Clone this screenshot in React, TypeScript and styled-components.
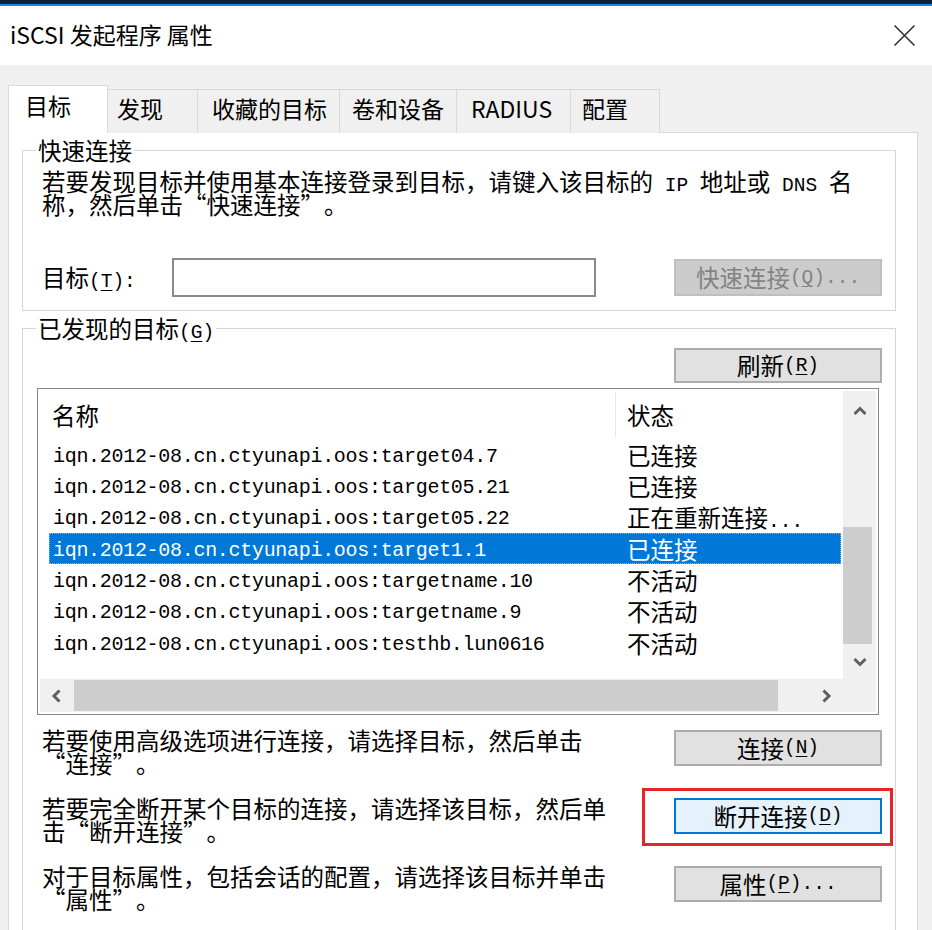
import React from 'react'
import styled, { createGlobalStyle, css } from 'styled-components'

interface Target {
    name: string;
    status: string;
}

const targets: Target[] = [
    { name: 'iqn.2012-08.cn.ctyunapi.oos:target04.7', status: '已连接' },
    { name: 'iqn.2012-08.cn.ctyunapi.oos:target05.21', status: '已连接' },
    { name: 'iqn.2012-08.cn.ctyunapi.oos:target05.22', status: '正在重新连接...' },
    { name: 'iqn.2012-08.cn.ctyunapi.oos:target1.1', status: '已连接' },
    { name: 'iqn.2012-08.cn.ctyunapi.oos:targetname.10', status: '不活动' },
    { name: 'iqn.2012-08.cn.ctyunapi.oos:targetname.9', status: '不活动' },
    { name: 'iqn.2012-08.cn.ctyunapi.oos:testhb.lun0616', status: '不活动' },
];

const tabs = [
    { label: '目标', w: 100, pl: 16 },
    { label: '发现', w: 91, pl: 9 },
    { label: '收藏的目标', w: 143, pl: 14 },
    { label: '卷和设备', w: 118, pl: 12 },
    { label: 'RADIUS', w: 115, pl: 14 },
    { label: '配置', w: 90, pl: 11 },
];

const actions = [
    { lines: ['若要使用高级选项进行连接，请选择目标，然后单击', '“连接”。'], button: '连接(&N)', focused: false },
    { lines: ['若要完全断开某个目标的连接，请选择该目标，然后单', '击“断开连接”。'], button: '断开连接(&D)', focused: true },
    { lines: ['对于目标属性，包括会话的配置，请选择该目标并单击', '“属性”。'], button: '属性(&P)...', focused: false },
];

const GlobalStyle = createGlobalStyle`
    html, body {
        margin: 0;
        padding: 0;
    }
    body {
        background: #f0f0f0;
        color: #000;
        font-family: "Noto Sans CJK SC", "Noto Sans", sans-serif;
        text-spacing-trim: space-all;
    }
`;

const Window = styled.div`
    width: 932px;
    height: 930px;
    display: flex;
    flex-direction: column;
    overflow: hidden;
    background: #f0f0f0;
`;

const TopEdge = styled.div`
    height: 4px;
    background: #0d2142;
    border-bottom: 2px solid #2d83d6;
`;

const TitleBar = styled.div`
    height: 59px;
    background: #fff;
    display: flex;
    align-items: center;
    justify-content: space-between;
    padding: 0 17px 0 10px;
`;

const Title = styled.div`
    font-size: 23px;
    line-height: 30px;
    margin-top: -3px;
`;

const Body = styled.div`
    flex: 1;
    min-height: 0;
    overflow: hidden;
    padding: 20px 14px 0 8px;
`;

const TabBar = styled.div`
    display: flex;
    align-items: flex-end;
    height: 48px;
    margin-bottom: -1px;
`;

const Tab = styled.div<{ $active?: boolean; $w: number; $pl: number }>`
    box-sizing: border-box;
    width: ${p => p.$w}px;
    height: ${p => (p.$active ? 48 : 44)}px;
    padding: ${p => (p.$active ? 4 : 3)}px 0 0 ${p => p.$pl}px;
    border: 1px solid #d9d9d9;
    border-bottom: none;
    background: ${p => (p.$active ? '#fff' : '#f0f0f0')};
    font-size: 23px;
    line-height: 30px;
    white-space: nowrap;
    & + & {
        margin-left: -1px;
    }
    ${p => p.$active && css`
        position: relative;
        z-index: 1;
    `}
`;

const Panel = styled.div`
    background: #fff;
    border: 1px solid #d9d9d9;
    padding: 5px 21px 0 13px;
    display: flex;
    flex-direction: column;
`;

const Group = styled.fieldset<{ $mt?: number; $pb?: number }>`
    margin: ${p => p.$mt ?? 0}px 0 0;
    padding: 0 13px ${p => p.$pb ?? 13}px 14px;
    border: 1px solid #d5d5d5;
    min-inline-size: 0;
    display: flex;
    flex-direction: column;
`;

const Legend = styled.legend`
    padding: 0 2px;
    margin-left: -1px;
    font-size: 23.5px;
    line-height: 24px;
    white-space: nowrap;
`;

const Desc = styled.div<{ $mt?: number }>`
    margin-top: ${p => p.$mt ?? 0}px;
    padding-left: 5px;
    font-size: 23.5px;
    line-height: 23px;
    white-space: nowrap;
`;

const Wide = styled.span`
    font-size: 23.5px;
    font-variant-east-asian: full-width;
`;

const Half = styled.span`
    font-family: "Liberation Mono", monospace;
    font-size: 19.5px;
    line-height: 0;
`;

const Key = styled.span`
    text-decoration: underline;
    text-underline-offset: 3px;
    text-decoration-thickness: 1px;
`;

const TargetRow = styled.div`
    display: flex;
    align-items: center;
    height: 39px;
    margin-top: 42px;
`;

const FieldLabel = styled.div`
    box-sizing: border-box;
    width: 135px;
    padding-left: 5px;
    font-size: 23.5px;
    line-height: 23px;
    white-space: nowrap;
`;

const TextInput = styled.div`
    box-sizing: border-box;
    width: 424px;
    height: 39px;
    border: 2px solid #8a8a8a;
    background: #fff;
`;

const ButtonSlot = styled.div<{ $marked?: boolean; $mt?: number }>`
    position: relative;
    margin-left: auto;
    margin-top: ${p => p.$mt ?? 0}px;
    ${p => p.$marked && css`
        &::after {
            content: '';
            position: absolute;
            left: -32px;
            right: -11px;
            top: -10px;
            bottom: -12px;
            border: 3px solid #e8242b;
        }
    `}
`;

const Button = styled.button<{ $focused?: boolean; $h?: number }>`
    box-sizing: border-box;
    width: 208px;
    height: ${p => p.$h ?? 36}px;
    margin: 0;
    padding: 0;
    border: 2px solid ${p => (p.$focused ? '#0078d7' : '#adadad')};
    background: ${p => (p.$focused ? '#e5f1fb' : '#e1e1e1')};
    color: #000;
    font-family: inherit;
    font-size: 23.5px;
    line-height: 23px;
    display: flex;
    align-items: center;
    justify-content: center;
    white-space: nowrap;
    &:disabled {
        background: #cccccc;
        border-color: #bfbfbf;
        color: #838383;
    }
`;

const ListBox = styled.div`
    box-sizing: border-box;
    height: 327px;
    margin: 5px 3px 0 0;
    border: 1px solid #828790;
    padding: 2px;
    background: #fff;
    display: grid;
    grid-template-columns: 1fr 33px;
    grid-template-rows: 1fr 33px;
`;

const ListContent = styled.div`
    overflow: hidden;
    min-width: 0;
`;

const HeaderRow = styled.div`
    display: flex;
    height: 48px;
    font-size: 23.5px;
    line-height: 48px;
`;

const HeadCell = styled.div<{ $w?: number; $pl: number }>`
    box-sizing: border-box;
    ${p => p.$w && `width: ${p.$w}px;`}
    padding-left: ${p => p.$pl}px;
    white-space: nowrap;
`;

const HeadDivider = styled.div`
    width: 1px;
    margin: 1px 0 2px;
    background: #e5e5e5;
`;

const Row = styled.div<{ $selected?: boolean }>`
    display: flex;
    align-items: center;
    height: 31.33px;
    margin: 0 2px 0 9px;
    ${p => p.$selected && css`
        background: #0078d7;
        color: #fff;
        outline: 1px dotted #f0a040;
        outline-offset: -1px;
    `}
`;

const NameCell = styled.div`
    box-sizing: border-box;
    width: 578px;
    padding: 4px 0 0 4px;
    font-family: "Liberation Mono", monospace;
    font-size: 20px;
    letter-spacing: -0.3px;
    line-height: 24px;
    white-space: nowrap;
`;

const StatusCell = styled.div`
    font-size: 23.5px;
    line-height: 24px;
    white-space: nowrap;
`;

const VScroll = styled.div`
    background: #f0f0f0;
    display: flex;
    flex-direction: column;
`;

const HScroll = styled.div`
    background: #f0f0f0;
    display: flex;
`;

const Corner = styled.div`
    background: #f0f0f0;
`;

const ArrowBox = styled.div<{ $size: number }>`
    flex: 0 0 ${p => p.$size}px;
    display: flex;
    align-items: center;
    justify-content: center;
`;

const Track = styled.div<{ $vertical?: boolean }>`
    flex: 1;
    display: flex;
    flex-direction: ${p => (p.$vertical ? 'column' : 'row')};
    align-items: ${p => (p.$vertical ? 'flex-start' : 'center')};
`;

const Thumb = styled.div<{ $vertical?: boolean; $offset: number; $length: number }>`
    flex: none;
    background: #cdcdcd;
    ${p => p.$vertical
        ? `width: 29px; height: ${p.$length}px; margin-top: ${p.$offset}px;`
        : `height: 31px; width: ${p.$length}px; margin-left: ${p.$offset}px;`}
`;

const ActionRow = styled.div<{ $mt: number }>`
    display: flex;
    align-items: flex-start;
    margin-top: ${p => p.$mt}px;
`;

function renderAscii(part: string, key: number) {
    const pieces = part.split(/&(.)/);
    return (
        <Half key={key}>
            {pieces.map((s, i) => (i % 2 === 1 ? <Key key={i}>{s}</Key> : s))}
        </Half>
    );
}

function Mixed({ text }: { text: string }) {
    const parts = text.split(/([\x20-\x7e]+)/);
    return (
        <>
            {parts.map((part, i) => {
                if (!part) return null;
                if (/^[\x20-\x7e]+$/.test(part)) return renderAscii(part, i);
                return <Wide key={i}>{part}</Wide>;
            })}
        </>
    );
}

function Chevron({ dir }: { dir: 'up' | 'down' | 'left' | 'right' }) {
    const points = {
        up: '2.5,11 8,5.5 13.5,11',
        down: '2.5,5 8,10.5 13.5,5',
        left: '10.5,2.5 5,8 10.5,13.5',
        right: '5.5,2.5 11,8 5.5,13.5',
    }[dir];
    return (
        <svg width="16" height="16" viewBox="0 0 16 16">
            <polyline points={points} fill="none" stroke="#606060" strokeWidth="3" />
        </svg>
    );
}

function CloseIcon() {
    return (
        <svg width="21" height="21" viewBox="0 0 21 21">
            <path d="M0.5 0.5 L20.5 20.5 M20.5 0.5 L0.5 20.5" stroke="#2b2b2b" strokeWidth="1.5" />
        </svg>
    );
}

function TargetList() {
    const selected = 3;
    return (
        <ListBox>
            <ListContent>
                <HeaderRow>
                    <HeadCell $w={575} $pl={12}>名称</HeadCell>
                    <HeadDivider />
                    <HeadCell $pl={11}>状态</HeadCell>
                </HeaderRow>
                {targets.map((t, i) => (
                    <Row key={t.name} $selected={i === selected}>
                        <NameCell>{t.name}</NameCell>
                        <StatusCell><Mixed text={t.status} /></StatusCell>
                    </Row>
                ))}
            </ListContent>
            <VScroll>
                <ArrowBox $size={40}><Chevron dir="up" /></ArrowBox>
                <Track $vertical>
                    <Thumb $vertical $offset={96} $length={117} />
                </Track>
                <ArrowBox $size={34}><Chevron dir="down" /></ArrowBox>
            </VScroll>
            <HScroll>
                <ArrowBox $size={34}><Chevron dir="left" /></ArrowBox>
                <Track>
                    <Thumb $offset={0} $length={704} />
                </Track>
                <ArrowBox $size={34}><Chevron dir="right" /></ArrowBox>
            </HScroll>
            <Corner />
        </ListBox>
    );
}

function App() {
    return (
        <Window>
            <GlobalStyle />
            <TopEdge />
            <TitleBar>
                <Title>iSCSI 发起程序 属性</Title>
                <CloseIcon />
            </TitleBar>
            <Body>
                <TabBar>
                    {tabs.map((t, i) => (
                        <Tab key={t.label} $active={i === 0} $w={t.w} $pl={t.pl}>{t.label}</Tab>
                    ))}
                </TabBar>
                <Panel>
                    <Group>
                        <Legend><Mixed text="快速连接" /></Legend>
                        <Desc $mt={8}>
                            <Mixed text="若要发现目标并使用基本连接登录到目标，请键入该目标的 IP 地址或 DNS 名" /><br />
                            <Mixed text="称，然后单击“快速连接”。" />
                        </Desc>
                        <TargetRow>
                            <FieldLabel><Mixed text="目标(&T):" /></FieldLabel>
                            <TextInput />
                            <ButtonSlot>
                                <Button disabled $h={37}><Mixed text="快速连接(&Q)..." /></Button>
                            </ButtonSlot>
                        </TargetRow>
                    </Group>
                    <Group $mt={5} $pb={40}>
                        <Legend><Mixed text="已发现的目标(&G)" /></Legend>
                        <ButtonSlot $mt={8}>
                            <Button $h={35}><Mixed text="刷新(&R)" /></Button>
                        </ButtonSlot>
                        <TargetList />
                        {actions.map((a, i) => (
                            <ActionRow key={a.button} $mt={i === 0 ? 14 : 22}>
                                <Desc>
                                    <Mixed text={a.lines[0]} /><br />
                                    <Mixed text={a.lines[1]} />
                                </Desc>
                                <ButtonSlot $marked={a.focused} $mt={1}>
                                    <Button $focused={a.focused}><Mixed text={a.button} /></Button>
                                </ButtonSlot>
                            </ActionRow>
                        ))}
                    </Group>
                </Panel>
            </Body>
        </Window>
    );
}

export default App
